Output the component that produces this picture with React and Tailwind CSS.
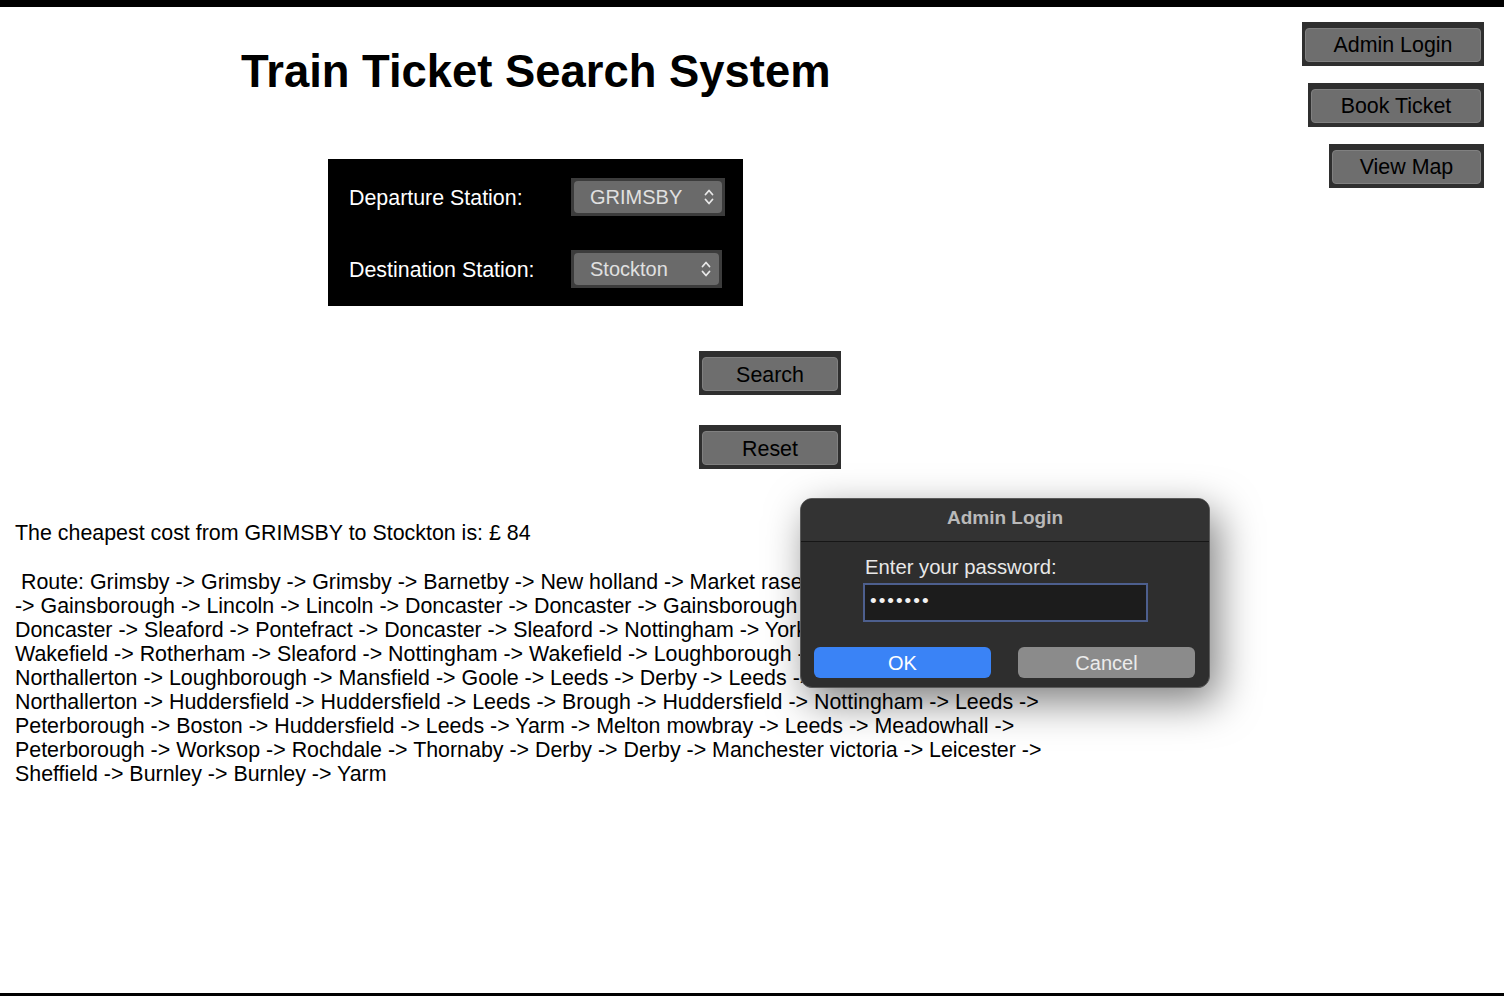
import React from "react";

const routeLines = [
  " Route: Grimsby -> Grimsby -> Grimsby -> Barnetby -> New holland -> Market rasen -> Market rasen -> Lincoln",
  "-> Gainsborough -> Lincoln -> Lincoln -> Doncaster -> Doncaster -> Gainsborough -> Retford -> Retford ->",
  "Doncaster -> Sleaford -> Pontefract -> Doncaster -> Sleaford -> Nottingham -> York -> York -> Leeds ->",
  "Wakefield -> Rotherham -> Sleaford -> Nottingham -> Wakefield -> Loughborough -> Leeds -> York ->",
  "Northallerton -> Loughborough -> Mansfield -> Goole -> Leeds -> Derby -> Leeds -> Sheffield -> Leeds ->",
  "Northallerton -> Huddersfield -> Huddersfield -> Leeds -> Brough -> Huddersfield -> Nottingham -> Leeds ->",
  "Peterborough -> Boston -> Huddersfield -> Leeds -> Yarm -> Melton mowbray -> Leeds -> Meadowhall ->",
  "Peterborough -> Worksop -> Rochdale -> Thornaby -> Derby -> Derby -> Manchester victoria -> Leicester ->",
  "Sheffield -> Burnley -> Burnley -> Yarm",
];

function TkButton({ label, width }) {
  return (
    <div
      className={`h-[44px] bg-[#2f2f2f] pt-[6px] pb-[4px] px-[3px] flex ${width}`}
    >
      <div className="flex-1 bg-[#6e6e6e] border border-[#808080] rounded-[4px] flex items-center justify-center text-black text-[21.4px] leading-none pt-[2px]">
        {label}
      </div>
    </div>
  );
}

function Chevrons() {
  return (
    <svg width="12" height="20" viewBox="0 0 12 20" fill="none">
      <path d="M2.5 7.5 L6 3.5 L9.5 7.5" stroke="#e8e8e8" strokeWidth="1.8" strokeLinecap="round" strokeLinejoin="round" />
      <path d="M2.5 12.5 L6 16.5 L9.5 12.5" stroke="#e8e8e8" strokeWidth="1.8" strokeLinecap="round" strokeLinejoin="round" />
    </svg>
  );
}

function StationSelect({ value, width }) {
  return (
    <div className={`h-[38px] bg-[#3c3c3c] p-[3px] flex ${width}`}>
      <div className="flex-1 bg-[#6a6a6a] rounded-[4px] flex items-center pl-[16px] pr-[7px]">
        <span className="flex-1 text-[#e0e0e0] text-[20px] leading-none">{value}</span>
        <Chevrons />
      </div>
    </div>
  );
}

export default function App() {
  return (
    <div className="w-[1504px] h-[996px] bg-white relative overflow-hidden flex flex-col border-t-[7px] border-b-[3px] border-black font-['Liberation_Sans',Arial,sans-serif] text-black">
      <div className="flex flex-1">
        {/* left column */}
        <div className="flex-1 flex flex-col items-start">
          <h1 className="ml-[241px] mt-[42px] text-[45.4px] leading-none font-bold whitespace-nowrap">
            Train Ticket Search System
          </h1>

          <div className="ml-[328px] mt-[65px] w-[415px] bg-black pt-[19px] pb-[18px] pl-[21px] pr-[18px] grid grid-cols-[222px_1fr] gap-y-[34px] items-center">
            <span className="text-white text-[21.4px] leading-none pt-[3px]">Departure Station:</span>
            <StationSelect value="GRIMSBY" width="w-[154px]" />
            <span className="text-white text-[21.4px] leading-none pt-[3px]">Destination Station:</span>
            <StationSelect value="Stockton" width="w-[151px]" />
          </div>

          <div className="ml-[699px] mt-[45px]">
            <TkButton label="Search" width="w-[142px]" />
          </div>
          <div className="ml-[699px] mt-[30px]">
            <TkButton label="Reset" width="w-[142px]" />
          </div>

          <p className="ml-[15px] mt-[52px] text-[21.4px] leading-[24px] whitespace-nowrap">
            The cheapest cost from GRIMSBY to Stockton is: £ 84
          </p>

          <div className="ml-[15px] mt-[25px] text-[21.4px] leading-[24px]">
            {routeLines.map((line, i) => (
              <div key={i} className="whitespace-pre">
                {line}
              </div>
            ))}
          </div>
        </div>

        {/* right column */}
        <div className="pt-[15px] pr-[20px] flex flex-col items-end gap-[17px]">
          <TkButton label="Admin Login" width="w-[182px]" />
          <TkButton label="Book Ticket" width="w-[176px]" />
          <TkButton label="View Map" width="w-[155px]" />
        </div>
      </div>

      {/* Admin login dialog */}
      <div className="absolute left-[800px] top-[491px] w-[410px] h-[190px] rounded-[12px] bg-[#2e2e2e] border border-[#5a5a5a] shadow-[8px_14px_40px_rgba(0,0,0,0.5)] flex flex-col overflow-hidden">
        <div className="h-[43px] bg-[#333333] border-b border-[#161616] flex items-center justify-center pb-[5px] text-[#b9b9b9] text-[19px] font-bold leading-none">
          Admin Login
        </div>
        <div className="flex flex-col pl-[62px] pt-[13px]">
          <span className="pl-[2px] text-[#e8e8e8] text-[20.3px] leading-[24px]">Enter your password:</span>
          <div className="mt-[4px] w-[285px] h-[39px] bg-[#1c1c1c] border-2 border-[#4d5f8e] flex items-center pl-[5px] pb-[4px] text-[#f2f2f2] text-[19px] tracking-[2px] leading-none">
            •••••••
          </div>
        </div>
        <div className="flex gap-[27px] pl-[13px] pr-[14px] mt-[25px]">
          <div className="w-[178px] h-[31px] rounded-[6px] bg-[#3a83f6] flex items-center justify-center text-white text-[20px] leading-none">
            OK
          </div>
          <div className="w-[178px] h-[31px] rounded-[6px] bg-[#8b8b8b] flex items-center justify-center text-[#ececec] text-[20px] leading-none">
            Cancel
          </div>
        </div>
      </div>
    </div>
  );
}
